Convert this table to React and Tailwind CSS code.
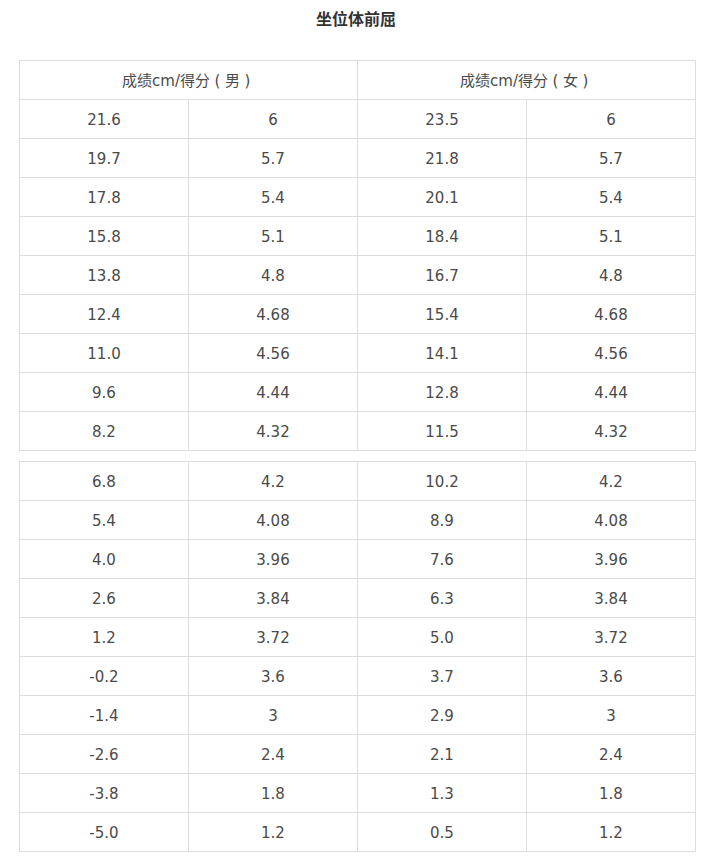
import React from "react";

const first = [
  ["21.6", "6", "23.5", "6"],
  ["19.7", "5.7", "21.8", "5.7"],
  ["17.8", "5.4", "20.1", "5.4"],
  ["15.8", "5.1", "18.4", "5.1"],
  ["13.8", "4.8", "16.7", "4.8"],
  ["12.4", "4.68", "15.4", "4.68"],
  ["11.0", "4.56", "14.1", "4.56"],
  ["9.6", "4.44", "12.8", "4.44"],
  ["8.2", "4.32", "11.5", "4.32"],
];

const second = [
  ["6.8", "4.2", "10.2", "4.2"],
  ["5.4", "4.08", "8.9", "4.08"],
  ["4.0", "3.96", "7.6", "3.96"],
  ["2.6", "3.84", "6.3", "3.84"],
  ["1.2", "3.72", "5.0", "3.72"],
  ["-0.2", "3.6", "3.7", "3.6"],
  ["-1.4", "3", "2.9", "3"],
  ["-2.6", "2.4", "2.1", "2.4"],
  ["-3.8", "1.8", "1.3", "1.8"],
  ["-5.0", "1.2", "0.5", "1.2"],
];

const Cell = ({ children, colSpan }) => (
  <td
    colSpan={colSpan}
    className="h-[39px] p-0 pt-[3px] border border-[#ddd] text-center align-middle"
  >
    {children}
  </td>
);

// full-width brackets keep their em box like the source page
const Head = ({ who }) => (
  <>
    成绩cm/得分
    <span className="inline-block w-[15px] text-center">(</span>
    <span className="inline-block w-[15px] text-center">{who}</span>
    <span className="inline-block w-[15px] text-center">)</span>
  </>
);

const ScoreTable = ({ rows, header, className }) => (
  <table className={"w-[677px] border-collapse table-fixed " + (className || "")}>
    <tbody>
      {header && (
        <tr>
          <Cell colSpan={2}>
            <Head who="男" />
          </Cell>
          <Cell colSpan={2}>
            <Head who="女" />
          </Cell>
        </tr>
      )}
      {rows.map((r, i) => (
        <tr key={i}>
          {r.map((v, j) => (
            <Cell key={j}>{v}</Cell>
          ))}
        </tr>
      ))}
    </tbody>
  </table>
);

export default function App() {
  return (
    <div
      className="w-[712px] min-h-[865px] bg-white text-[15px] text-[#4a4a4a]"
      style={{ fontFamily: '"DejaVu Sans", "Noto Sans CJK SC", sans-serif' }}
    >
      <div className="h-[40px] flex items-center justify-center font-bold text-[16px] text-[#333]">
        坐位体前屈
      </div>
      <div className="pl-[19px] pt-[20px]">
        <ScoreTable rows={first} header />
        <ScoreTable rows={second} className="mt-[10px]" />
      </div>
    </div>
  );
}
